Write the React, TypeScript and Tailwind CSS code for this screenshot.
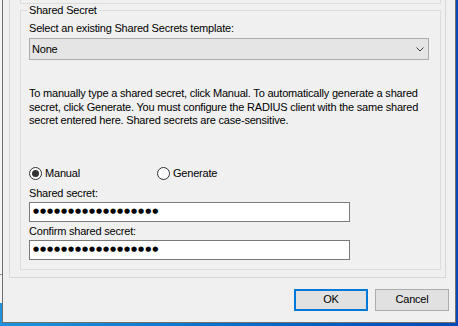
import React from 'react';

const text = "font-['Liberation_Sans',Arial,sans-serif] text-[11px] leading-[13px] tracking-[-0.2px] text-black";

const Radio = ({ checked }: { checked?: boolean }) => (
  <span className="flex h-[13px] w-[13px] shrink-0 items-center justify-center rounded-full border border-[#333333] bg-white">
    {checked && <span className="h-[7px] w-[7px] rounded-full bg-[#333333]" />}
  </span>
);

const SecretBox = () => (
  <div className="mt-[2px] flex h-[20px] w-[321px] items-center border border-[#7a7a7a] bg-white pl-[3px]">
    <span className="font-['DejaVu_Sans',sans-serif] text-[7px] leading-none tracking-[0.9px]">
      {'●'.repeat(18)}
    </span>
  </div>
);

export default function App() {
  return (
    <div className={`flex h-[326px] w-[458px] bg-linear-to-r from-[#1e94dc] to-[#0747b8] ${text}`}>
      {/* strip of the window behind */}
      <div className="flex w-[2px] flex-col">
        <div className="h-[274px] bg-[#f5f5f5]" />
        <div className="h-[1px] bg-[#8a8a8a]" />
        <div className="h-[28px] bg-[#f5f5f5]" />
      </div>

      {/* dialog */}
      <div className="flex h-[323px] w-[454px] flex-col border-x border-b border-[#707070] bg-[#f0f0f0]">
        {/* tab page */}
        <div className="ml-[6px] mr-[9px] border-x border-b border-[#d9d9d9] pb-[7px] pl-[10px] pr-[4px]">
          <div className="h-[4px] border-x border-b border-[#dcdcdc]" />

          <fieldset className="border border-[#dcdcdc] pb-[9px] pl-[8px] pt-[5px]">
            <legend className="-ml-[2px] px-[2px]">Shared Secret</legend>

            <div>Select an existing Shared Secrets template:</div>
            <div className="mt-[3px] flex h-[22px] w-[400px] items-center justify-between border border-[#acacac] bg-[#e5e5e5] pl-[2px] pr-[4px]">
              <span>None</span>
              <svg width="8" height="5" viewBox="0 0 8 5" className="mt-[1px]">
                <polyline points="0.5,0.5 4,4 7.5,0.5" fill="none" stroke="#404040" strokeWidth="1" />
              </svg>
            </div>

            <p className="mt-[27px] leading-[13.5px]">
              To manually type a shared secret, click Manual. To automatically generate a shared
              <br />
              secret, click Generate. You must configure the RADIUS client with the same shared
              <br />
              secret entered here. Shared secrets are case-sensitive.
            </p>

            <div className="mt-[39px] flex h-[13px] items-center">
              <label className="flex w-[128px] items-center gap-[3px]">
                <Radio checked />
                <span>Manual</span>
              </label>
              <label className="flex items-center gap-[3px]">
                <Radio />
                <span>Generate</span>
              </label>
            </div>

            <div className="mt-[7px]">Shared secret:</div>
            <SecretBox />
            <div className="mt-[3px]">Confirm shared secret:</div>
            <SecretBox />
          </fieldset>
        </div>

        {/* buttons */}
        <div className="mt-[11px] flex justify-end gap-[7px] pr-[6px]">
          <button className="h-[22px] w-[74px] border-2 border-[#0078d7] bg-[#e1e1e1]">OK</button>
          <button className="h-[22px] w-[74px] border border-[#adadad] bg-[#e1e1e1]">Cancel</button>
        </div>
      </div>
    </div>
  );
}
